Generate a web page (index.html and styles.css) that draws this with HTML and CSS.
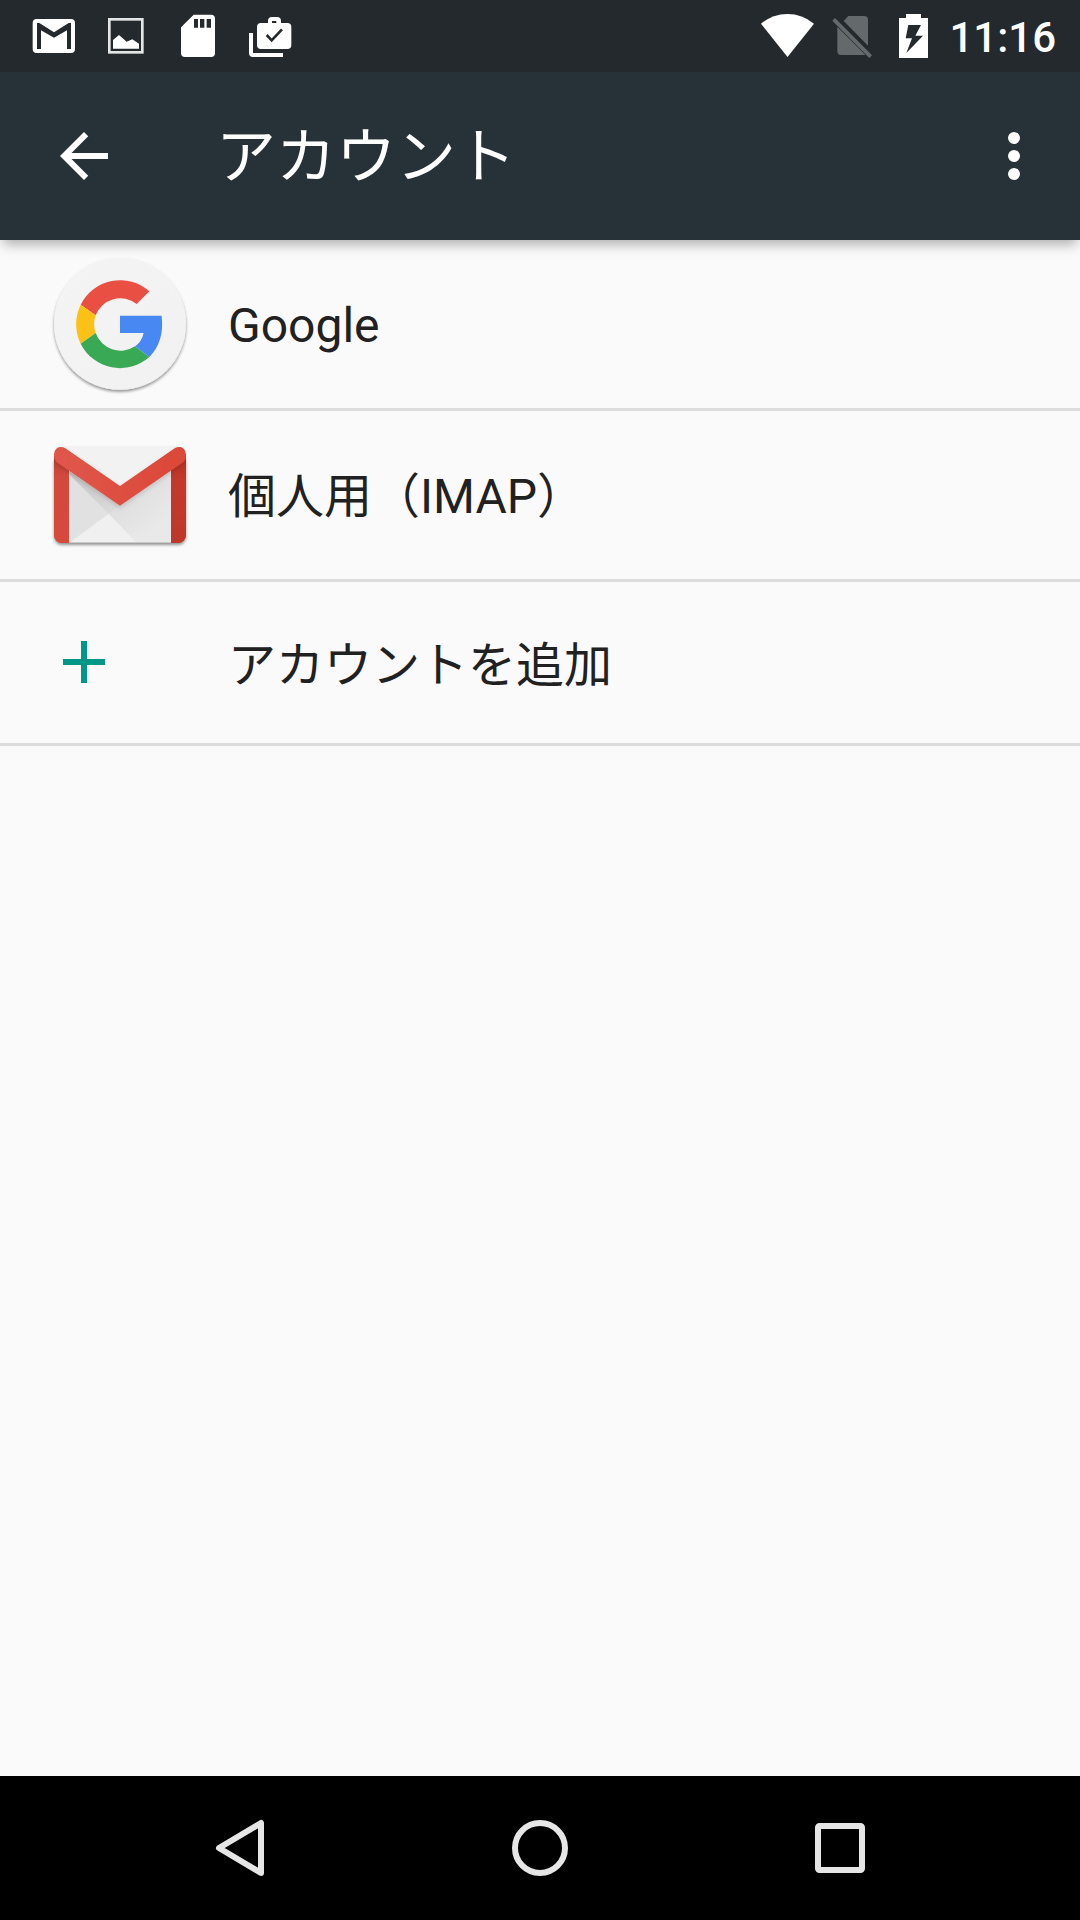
FILE: index.html
```html
<!DOCTYPE html>
<html lang="ja">
<head>
<meta charset="utf-8">
<title>アカウント</title>
<link rel="stylesheet" href="styles.css">
</head>
<body>
<div class="screen">
  <header class="status-bar">
    <div class="notifications">
      <svg class="notification" viewBox="54 0 216 216"><rect x="98" y="57" width="127" height="102" rx="12" fill="#fff"/><path d="M111 69H118L162 97L206 69H213V147H201V91L162 113L123 91V147H111Z" fill="#23292d"/></svg>
      <svg class="notification" viewBox="270 0 216 216"><rect x="328" y="58" width="99" height="99" fill="none" stroke="#e4e5e5" stroke-width="8"/><path d="M339 146V120L357 105L380 125L397 118L417 131V146Z" fill="#fff"/></svg>
      <svg class="notification" viewBox="486 0 216 216"><path fill="#fff" fill-rule="evenodd" d="M581 44H633Q645 44 645 56V159Q645 171 633 171H555Q543 171 543 159V82ZM582 57V83H594V57ZM600 57V83H613V57ZM620 57V83H633V57Z"/></svg>
      <svg class="notification" viewBox="702 0 216 216"><path fill="#fff" fill-rule="evenodd" d="M747 99H759V159H849V171H759Q747 171 747 159ZM783 69H804V63Q804 51 816 51H831Q843 51 843 63V69H862Q874 69 874 81V135Q874 147 862 147H783Q771 147 771 135V81Q771 69 783 69ZM816 63V69H829V63Z"/><path d="M800 105L815 121L846 88" fill="none" stroke="#23292d" stroke-width="8"/></svg>
    </div>
    <div class="system">
      <svg class="wifi" viewBox="45 0 195 216"><path d="M63 71Q98 42 142.500 42Q187 42 222 71L142.500 171Z" fill="#fff"/></svg>
      <svg class="sim" viewBox="270 0 135 216"><g fill="#64696c"><path d="M325 48H372Q384 48 384 60V137L311 63Z"/><path d="M292 80L376 164Q374 165 371 165H304Q292 165 292 153Z"/><path d="M285 54L396 166L388 174L277 62Z"/></g></svg>
      <svg class="battery" viewBox="465 0 111 216"><path fill="#fff" fill-rule="evenodd" d="M498 42H543V54H564V174H477V54H498ZM505 75L497 115H516L499 159L549 107H526L543 75Z"/></svg>
      <span class="clock">11:16</span>
    </div>
  </header>
  <div class="app-bar">
    <svg class="action" viewBox="0 0 24 24"><path fill="#fff" d="M20 11H7.830l5.590-5.590L12 4l-8 8 8 8 1.410-1.410L7.830 13H20v-2z"/></svg>
    <h1 class="title">アカウント</h1>
    <svg class="action" viewBox="0 0 24 24" fill="#fff"><circle cx="12" cy="6" r="2"/><circle cx="12" cy="12" r="2"/><circle cx="12" cy="18" r="2"/></svg>
  </div>
  <main class="accounts">
    <div class="account">
      <svg class="logo" viewBox="24 21 432 432">
        <defs>
          <filter id="drop" x="-10%" y="-10%" width="120%" height="125%"><feDropShadow dx="0" dy="6" stdDeviation="4" flood-color="#000" flood-opacity=".42"/></filter>
          <linearGradient id="disc" x1="0" y1="0" x2="1" y2="1"><stop offset="0" stop-color="#f4f4f4"/><stop offset="1" stop-color="#f1f1f1"/></linearGradient>
        </defs>
        <circle cx="240" cy="236.500" r="198" fill="url(#disc)" filter="url(#drop)"/>
        <path fill="#ea4f43" d="M328 139A132 132 0 0 0 122 179L167 211A79 79 0 0 1 290 177Z"/>
        <path fill="#fbc117" d="M122 179A132 132 0 0 0 122 296L167 264A79 79 0 0 1 167 211Z"/>
        <path fill="#3aa956" d="M122 296A132 132 0 0 0 328 336L285 304A79 79 0 0 1 167 264Z"/>
        <path fill="#4788f3" d="M240 212H365Q374 289 328 336L285 304Q305 291 311 264H240Z"/>
      </svg>
      <span class="name">Google</span>
    </div>
    <div class="account">
      <svg class="logo" viewBox="24 -21 432 432">
        <defs>
          <linearGradient id="left" x1="0" y1="0" x2="0" y2="1"><stop offset="0" stop-color="#b93e33"/><stop offset=".25" stop-color="#d4493d"/><stop offset="1" stop-color="#d6493d"/></linearGradient>
          <linearGradient id="right" x1="0" y1="0" x2="0" y2="1"><stop offset="0" stop-color="#b03225"/><stop offset=".3" stop-color="#c4392b"/><stop offset="1" stop-color="#bd382a"/></linearGradient>
          <linearGradient id="flap" x1="0" y1="0" x2="1" y2="0"><stop offset="0" stop-color="#e0574b"/><stop offset="1" stop-color="#db4738"/></linearGradient>
          <linearGradient id="shade" gradientUnits="userSpaceOnUse" x1="100" y1="130" x2="215" y2="245"><stop offset="0" stop-color="#c6c6c6"/><stop offset="1" stop-color="#dadada"/></linearGradient>
          <linearGradient id="paper" gradientUnits="userSpaceOnUse" x1="240" y1="226" x2="320" y2="320"><stop offset="0" stop-color="#dfdfdf"/><stop offset="1" stop-color="#e9e9e9"/></linearGradient>
          <clipPath id="envelope"><rect x="42" y="48" width="396" height="291" rx="24"/></clipPath>
          <filter id="fold" x="-10%" y="-10%" width="120%" height="150%"><feDropShadow dx="0" dy="7" stdDeviation="7" flood-color="#000" flood-opacity=".14"/></filter>
        </defs>
        <rect x="42" y="70" width="396" height="269" rx="24" fill="#d4493d" filter="url(#drop)"/>
        <path d="M64 48H416L438 90V120H42V90Z" fill="#f2f2f2"/>
        <g clip-path="url(#envelope)">
          <path d="M87 100H393V339H87Z" fill="url(#paper)"/>
          <path d="M87 132L206 251L87 337Z" fill="#e1e1e1"/>
          <path d="M87 110L240 226L206 251L87 132Z" fill="url(#shade)"/>
          <path d="M206 251L290 339H87Z" fill="#f0f0f0"/>
          <path d="M87 336H393V339H87Z" fill="#c9c9c6"/>
          <path d="M42 74L87 105V339H42Z" fill="url(#left)"/>
          <path d="M438 74L393 105V339H438Z" fill="url(#right)"/>
          <path d="M66 48H414L240 169Z" fill="#f2f2f2"/>
          <path d="M42 74C42 53 61 46 76 55L240 168L404 55C419 46 438 53 438 74Q438 91 425 100L240 227L55 100Q42 91 42 74Z" fill="url(#flap)" filter="url(#fold)"/>
        </g>
      </svg>
      <span class="name">個人用（IMAP）</span>
    </div>
    <div class="account account-add">
      <svg class="plus" viewBox="0 1 72 71"><path d="M33 15H39V33H57V39H39V57H33V39H15V33H33Z" fill="#009688"/></svg>
      <span class="name name-add">アカウントを追加</span>
    </div>
  </main>
  <nav class="nav-bar">
    <svg class="nav-button" viewBox="0 0 144 144"><path d="M93 47V97L51 72Z" class="outline"/></svg>
    <svg class="nav-button" viewBox="0 0 144 144"><circle cx="72" cy="72" r="25" class="outline"/></svg>
    <svg class="nav-button" viewBox="0 0 144 144"><rect x="50" y="50" width="44" height="44" rx="1.500" class="outline"/></svg>
  </nav>
</div>
</body>
</html>
```

FILE: styles.css
```css
* {
  box-sizing: border-box;
}

body {
  margin: 0;
  font-family: Roboto, "Noto Sans CJK JP", sans-serif;
}

svg {
  display: block;
  flex: none;
}

.screen {
  display: flex;
  flex-direction: column;
  width: 1080px;
  height: 1920px;
  overflow: hidden;
  background: #fafafa;
}

.status-bar {
  display: flex;
  justify-content: space-between;
  height: 72px;
  padding: 0 24px 0 18px;
  background: #23292d;
}

.notifications,
.system {
  display: flex;
}

.notification {
  width: 72px;
  height: 72px;
}

.wifi {
  width: 65px;
  height: 72px;
  margin-right: 10px;
}

.sim {
  width: 45px;
  height: 72px;
  margin-right: 20px;
}

.battery {
  width: 37px;
  height: 72px;
}

.clock {
  width: 124px;
  padding-top: 2px;
  color: #fff;
  font-size: 42px;
  font-weight: 500;
  line-height: 72px;
  text-align: right;
}

.app-bar {
  z-index: 1;
  display: flex;
  align-items: center;
  height: 168px;
  padding: 0 30px 0 48px;
  background: #273238;
  box-shadow: 0 7px 12px -3px rgba(0, 0, 0, .32);
  clip-path: inset(0 0 -30px 0);
}

.action {
  width: 72px;
  height: 72px;
}

.title {
  flex: 1;
  margin: 0 0 0 96px;
  padding-top: 4px;
  color: #fff;
  font-size: 60px;
  font-weight: 400;
  line-height: 72px;
}

.accounts {
  flex: 1;
}

.account {
  display: flex;
  align-items: center;
  height: 171px;
  padding-left: 48px;
  border-bottom: 3px solid #dcdcdc;
}

.account-add {
  height: 164px;
}

.logo {
  width: 144px;
  height: 144px;
  margin-right: 36px;
}

.plus {
  width: 72px;
  height: 71px;
  margin-right: 108px;
}

.name {
  padding-top: 3px;
  color: #212121;
  font-size: 48px;
  line-height: 60px;
}

.name-add {
  padding-top: 6px;
}

.nav-bar {
  display: flex;
  justify-content: space-between;
  height: 144px;
  padding: 0 168px;
  background: #000;
}

.nav-button {
  width: 144px;
  height: 144px;
}

.outline {
  fill: none;
  stroke: #e6e6e6;
  stroke-width: 6px;
  stroke-linejoin: round;
}
```
